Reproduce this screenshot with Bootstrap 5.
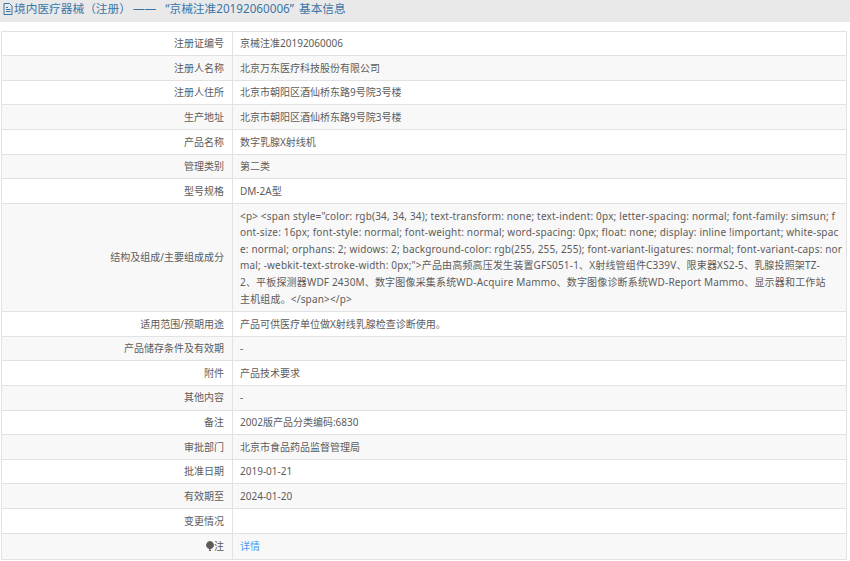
<!DOCTYPE html>
<html lang="zh-CN">
<head>
    <meta charset="UTF-8">
    <title>境内医疗器械（注册）</title>
    <link href="https://cdn.jsdelivr.net/npm/bootstrap@5.3.0/dist/css/bootstrap.min.css" rel="stylesheet">
    <style>
        body {
            background: #fff;
            font-family: "Noto Sans", "Noto Sans CJK SC", sans-serif;
            font-size: 10px;
            color: #5c5c5c;
            overflow: hidden;
        }

        .page-head {
            height: 22px;
            background: #e9e9e9;
            color: #3b76a6;
            font-size: 11.7px;
            line-height: 17px;
            padding-left: 3px;
        }

        .head-gap {
            margin: 0 9px 0 2px;
        }

        .head-tail {
            margin-left: 5px;
        }

        .detail-wrap {
            padding: 8.5px 3px 0 1px;
        }

        .detail-table {
            table-layout: fixed;
            width: 100%;
            margin: 0;
            border: 1px solid #e2e2e2;
            border-collapse: collapse;
            color: #5c5c5c;
        }

        .detail-table td {
            border: 1px solid #e2e2e2;
            height: 24.65px;
            padding: 0 6px 0 7px;
            font-size: 10px;
            line-height: 16.6px;
            vertical-align: middle;
            background: #fff;
        }

        .detail-table tr:nth-child(even) td {
            background: #f8f8f8;
        }

        .detail-table td.cell-label {
            width: 231px;
            text-align: right;
            padding-right: 8px;
        }

        .detail-table td.cell-long {
            height: 108px;
            padding-right: 0;
            letter-spacing: .17px;
            white-space: nowrap;
        }

        .detail-table tr.row-last td {
            height: 26px;
        }

        .more-link {
            color: #4a9bf0;
            text-decoration: none;
        }

        .head-icon {
            width: 10px;
            height: 12px;
            vertical-align: -2px;
            margin-right: 1px;
        }

        .note-icon {
            width: 8px;
            height: 10px;
            vertical-align: -1px;
        }
    </style>
</head>
<body>

<div class="page-head">
    <svg class="head-icon" viewBox="0 0 10 12" fill="none" stroke="#3b76a6" stroke-width="1"><path d="M1 .5h5.500L9 3v8.500H1z"/><path d="M3 4.500h2M3 6.500h4.500M3 8.500h4.500"/></svg>境内医疗器械（注册）<span class="head-gap">——</span>“京械注准20192060006”<span class="head-tail">基本信息</span>
</div>

<div class="detail-wrap">
    <table class="detail-table">
        <tbody>
        <tr><td class="cell-label">注册证编号</td><td>京械注准20192060006</td></tr>
        <tr><td class="cell-label">注册人名称</td><td>北京万东医疗科技股份有限公司</td></tr>
        <tr><td class="cell-label">注册人住所</td><td>北京市朝阳区酒仙桥东路9号院3号楼</td></tr>
        <tr><td class="cell-label">生产地址</td><td>北京市朝阳区酒仙桥东路9号院3号楼</td></tr>
        <tr><td class="cell-label">产品名称</td><td>数字乳腺X射线机</td></tr>
        <tr><td class="cell-label">管理类别</td><td>第二类</td></tr>
        <tr><td class="cell-label">型号规格</td><td>DM-2A型</td></tr>
        <tr><td class="cell-label">结构及组成/主要组成成分</td><td class="cell-long">&lt;p&gt; &lt;span style="color: rgb(34, 34, 34); text-transform: none; text-indent: 0px; letter-spacing: normal; font-family: simsun; f<br>ont-size: 16px; font-style: normal; font-weight: normal; word-spacing: 0px; float: none; display: inline !important; white-spac<br>e: normal; orphans: 2; widows: 2; background-color: rgb(255, 255, 255); font-variant-ligatures: normal; font-variant-caps: nor<br>mal; -webkit-text-stroke-width: 0px;"&gt;产品由高频高压发生装置GFS051-1、X射线管组件C339V、限束器XS2-5、乳腺投照架TZ-<br>2、平板探测器WDF 2430M、数字图像采集系统WD-Acquire Mammo、数字图像诊断系统WD-Report Mammo、显示器和工作站<br>主机组成。&lt;/span&gt;&lt;/p&gt;</td></tr>
        <tr><td class="cell-label">适用范围/预期用途</td><td>产品可供医疗单位做X射线乳腺检查诊断使用。</td></tr>
        <tr><td class="cell-label">产品储存条件及有效期</td><td>-</td></tr>
        <tr><td class="cell-label">附件</td><td>产品技术要求</td></tr>
        <tr><td class="cell-label">其他内容</td><td>-</td></tr>
        <tr><td class="cell-label">备注</td><td>2002版产品分类编码:6830</td></tr>
        <tr><td class="cell-label">审批部门</td><td>北京市食品药品监督管理局</td></tr>
        <tr><td class="cell-label">批准日期</td><td>2019-01-21</td></tr>
        <tr><td class="cell-label">有效期至</td><td>2024-01-20</td></tr>
        <tr><td class="cell-label">变更情况</td><td></td></tr>
        <tr class="row-last"><td class="cell-label"><svg class="note-icon" viewBox="0 0 8 10" fill="#5c5c5c"><path d="M4 0a4 4 0 0 1 2.500 7L5 8H3L1.500 7A4 4 0 0 1 4 0z"/><path d="M3 8.500h2V10H3z"/></svg>注</td><td><a class="more-link" href="#">详情</a></td></tr>
        </tbody>
    </table>
</div>

<script src="https://cdn.jsdelivr.net/npm/bootstrap@5.3.0/dist/js/bootstrap.bundle.min.js"></script>
</body>
</html>
